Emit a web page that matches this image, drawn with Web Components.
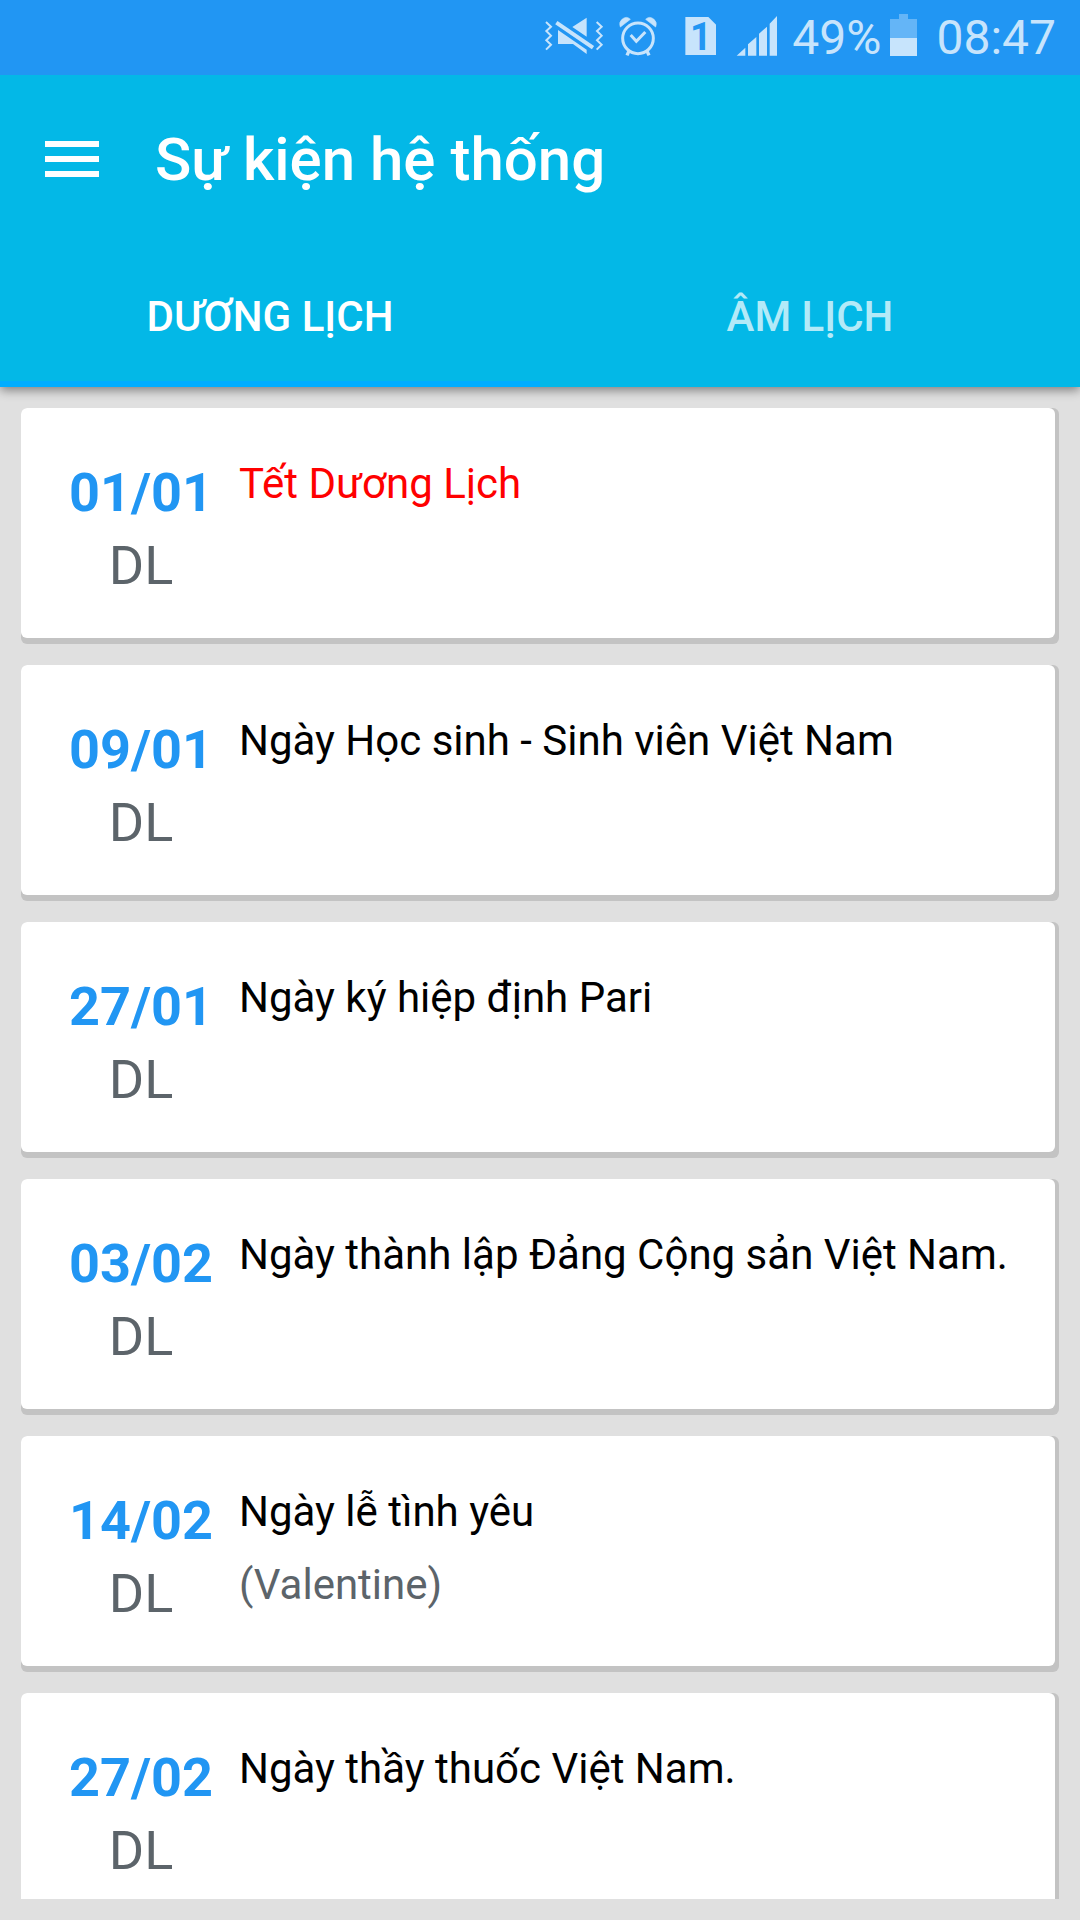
<!DOCTYPE html>
<html lang="vi">
<head>
<meta charset="utf-8">
<meta name="viewport" content="width=device-width, initial-scale=1">
<title>Sự kiện hệ thống</title>
<style>
  body {
    margin: 0;
    height: 100vh;
    display: flex;
    flex-direction: column;
    background-color: #e0e0e0;
    font-family: Roboto, "Noto Sans", sans-serif;
  }
</style>
</head>
<body>
<status-bar data-battery="49%" data-time="08:47"></status-bar>
<app-header data-title="Sự kiện hệ thống">
  <header-tab slot="tabs" selected>DƯƠNG LỊCH</header-tab>
  <header-tab slot="tabs">ÂM LỊCH</header-tab>
</app-header>
<event-list>
  <event-card data-date="01/01" holiday>Tết Dương Lịch</event-card>
  <event-card data-date="09/01">Ngày Học sinh - Sinh viên Việt Nam</event-card>
  <event-card data-date="27/01">Ngày ký hiệp định Pari</event-card>
  <event-card data-date="03/02">Ngày thành lập Đảng Cộng sản Việt Nam.</event-card>
  <event-card data-date="14/02">Ngày lễ tình yêu<span slot="note">(Valentine)</span></event-card>
  <event-card data-date="27/02">Ngày thầy thuốc Việt Nam.</event-card>
</event-list>

<script>
// clones the markup into an open shadow root
function attach(element, html) {
  const template = document.createElement("template");
  template.innerHTML = html;
  element.attachShadow({ mode: "open" });
  element.shadowRoot.appendChild(template.content.cloneNode(true));
}

// system bar: icons, battery level and clock
class StatusBar extends HTMLElement {
  constructor() {
    super();
    attach(this, `
<style>
  :host {
    flex: none;
    display: flex;
    position: relative;
    z-index: 2;
    align-items: center;
    justify-content: flex-end;
    height: 75px;
    padding-right: 24px;
    background-color: #2196f3;
    color: #c7e4fc;
    font-size: 48px;
    line-height: 56px;
  }
  svg { display: block; flex: none; }
  .sim {
    width: 31px;
    height: 38px;
    margin: 0 20px 3px 27px;
    background-color: #c7e4fc;
    clip-path: polygon(0 0, 23px 0, 100% 8px, 100% 100%, 0 100%);
    color: #2196f3;
    font-size: 38px;
    font-weight: bold;
    line-height: 40px;
    text-align: center;
  }
  .mute { margin-right: 14px; }
  .signal { margin-right: 14px; }
  .battery { margin: 0 19px 0 9px; }
</style>
<svg class="mute" width="60" height="43" viewBox="42 48 180 129" aria-hidden="true">
  <g fill="none" stroke="#c7e4fc" stroke-width="6">
    <path d="M48 66L63 80L49 93L63 107L49 121L63 134L48 149"/>
    <path d="M200 66L215 80L201 93L215 107L201 121L215 134L200 149"/>
  </g>
  <path d="M170 53V110L127 81ZM84 90L170 149V162L129 132H84Z" fill="#c7e4fc"/>
  <path d="M79 68L189 143" stroke="#c7e4fc" stroke-width="12"/>
</svg>
<svg width="40" height="43" viewBox="261 48 120 129" aria-hidden="true">
  <g fill="none" stroke="#c7e4fc">
    <circle cx="321" cy="115" r="46" stroke-width="9"/>
    <path d="M299 105L316 124L343 96" stroke-width="9"/>
    <path d="M294 153L288 166M348 153L354 166" stroke-width="10"/>
  </g>
  <path d="M268 81Q262 66 274 57Q287 47 298 58ZM374 81Q380 66 368 57Q355 47 344 58Z" fill="#c7e4fc" stroke="#c7e4fc" stroke-width="2"/>
</svg>
<div class="sim">1</div>
<svg class="signal" width="42" height="43" viewBox="620 48 126 129" aria-hidden="true">
  <path d="M622 167L648 143V167ZM656 167V133L681 111V167ZM689 167V101L713 80V167ZM721 167V71L743 48V167Z" fill="#c7e4fc"/>
</svg>
<span id="level"></span>
<svg class="battery" width="27" height="47" viewBox="0 0 27 47" aria-hidden="true">
  <path d="M0 5H9V0H18V5H27V42H0Z" fill="#64b5f7"/>
  <path d="M0 24H27V42H0Z" fill="#c7e4fc"/>
</svg>
<time id="time"></time>
`);
  }

  connectedCallback() {
    this.shadowRoot.querySelector("#level").textContent = this.dataset.battery;
    this.shadowRoot.querySelector("#time").textContent = this.dataset.time;
  }
}

// toolbar with the menu button, title and a row of tabs
class AppHeader extends HTMLElement {
  constructor() {
    super();
    attach(this, `
<style>
  :host {
    flex: none;
    display: block;
    position: relative;
    z-index: 1;
    background-color: #03b8e7;
    color: white;
    box-shadow: 0 3px 10px rgba(0, 0, 0, .45);
  }
  header {
    display: flex;
    align-items: center;
    gap: 29px;
    height: 168px;
    padding: 0 18px;
  }
  button {
    padding: 27px;
    border: 0;
    background: none;
    color: inherit;
  }
  svg { display: block; }
  h1 {
    margin: 0;
    padding-top: 2px;
    font-size: 60px;
    font-weight: 500;
    line-height: 72px;
  }
  nav { display: flex; height: 144px; }
</style>
<header>
  <button type="button" aria-label="Menu">
    <svg width="54" height="36" viewBox="0 0 54 36"><path d="M0 3H54M0 18H54M0 33H54" stroke="currentColor" stroke-width="6"/></svg>
  </button>
  <h1></h1>
</header>
<nav role="tablist"><slot name="tabs"></slot></nav>
`);
  }

  connectedCallback() {
    this.shadowRoot.querySelector("h1").textContent = this.dataset.title;
  }
}

class HeaderTab extends HTMLElement {
  constructor() {
    super();
    attach(this, `
<style>
  :host { flex: 1; display: flex; }
  button {
    flex: 1;
    padding: 10px 0 0;
    border: 0;
    border-bottom: 6px solid transparent;
    background: none;
    color: #b3eaf8;
    font: 500 42px/50px Roboto, "Noto Sans", sans-serif;
  }
  :host([selected]) button {
    border-bottom-color: #00adff;
    color: white;
  }
</style>
<button type="button" role="tab"><slot></slot></button>
`);
  }

  connectedCallback() {
    this.shadowRoot.querySelector("button").setAttribute("aria-selected", this.hasAttribute("selected"));
  }
}

// scrolling column of cards
class EventList extends HTMLElement {
  constructor() {
    super();
    attach(this, `
<style>
  :host {
    flex: 1;
    min-height: 0;
    display: flex;
    flex-direction: column;
    gap: 21px;
    margin: 21px;
    overflow-y: auto;
    scrollbar-width: none;
  }
</style>
<slot></slot>
`);
  }
}

class EventCard extends HTMLElement {
  constructor() {
    super();
    attach(this, `
<style>
  :host {
    flex: none;
    display: block;
    padding: 0 4px 6px 0;
    border-radius: 6px;
    background-color: #c3c3c3;
    color: #5c646a;
    line-height: 73px;
  }
  article {
    display: flex;
    gap: 25px;
    padding: 39px 24px 36px 47px;
    border-radius: 6px;
    background-color: white;
  }
  .day {
    flex: none;
    width: 146px;
    padding-top: 9px;
    font-size: 54px;
    text-align: center;
  }
  time {
    display: block;
    color: #2196f3;
    font-weight: bold;
  }
  .info { flex: 1; font-size: 42px; }
  h2 {
    margin: 0;
    color: black;
    font-size: 42px;
    font-weight: normal;
  }
  :host([holiday]) h2 { color: #ff0000; }
</style>
<article>
  <div class="day"><time></time>DL</div>
  <div class="info">
    <h2><slot></slot></h2>
    <slot name="note"></slot>
  </div>
</article>
`);
  }

  connectedCallback() {
    this.shadowRoot.querySelector("time").textContent = this.dataset.date;
  }
}

customElements.define("status-bar", StatusBar);
customElements.define("app-header", AppHeader);
customElements.define("header-tab", HeaderTab);
customElements.define("event-list", EventList);
customElements.define("event-card", EventCard);
</script>
</body>
</html>
